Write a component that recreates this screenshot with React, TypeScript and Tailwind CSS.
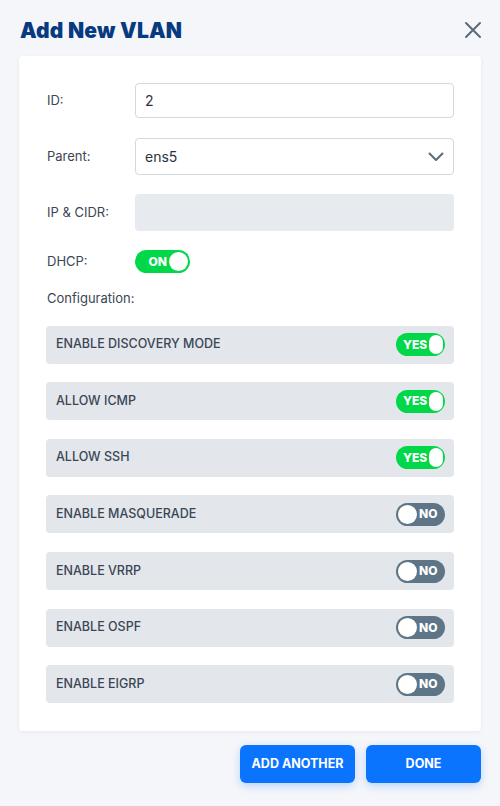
import React from 'react';

const rows: { label: string; on: boolean }[] = [
  { label: 'ENABLE DISCOVERY MODE', on: true },
  { label: 'ALLOW ICMP', on: true },
  { label: 'ALLOW SSH', on: true },
  { label: 'ENABLE MASQUERADE', on: false },
  { label: 'ENABLE VRRP', on: false },
  { label: 'ENABLE OSPF', on: false },
  { label: 'ENABLE EIGRP', on: false },
];

const Toggle: React.FC<{ on: boolean; onText: string; offText: string }> = ({ on, onText, offText }) => (
  <div
    className={`flex h-[23px] items-center rounded-full px-[2px] ${on ? 'bg-[#00d84a] justify-end' : 'bg-[#5d7586] justify-start'}`}
  >
    {on ? (
      <>
        <span className="pl-[5px] pr-[2px] text-[12px] font-extrabold leading-none text-white">{onText}</span>
        <span className="h-[19px] w-[19px] rounded-full bg-white" />
      </>
    ) : (
      <>
        <span className="h-[19px] w-[19px] rounded-full bg-white" />
        <span className="pl-[2px] pr-[5px] text-[12px] font-extrabold leading-none text-white">{offText}</span>
      </>
    )}
  </div>
);

export default function App() {
  return (
    <div className="min-h-[806px] bg-[#f4f6fa] px-[19px] pt-[17px] font-['Inter',sans-serif]">
      <div className="flex h-[26px] items-center justify-between">
        <h1 className="pl-[1px] text-[21px] font-black leading-none tracking-[0.2px] text-[#073a80]">Add New VLAN</h1>
        <svg width="18" height="18" viewBox="0 0 18 18" className="mr-[-1px]">
          <path d="M2 2 L16 16 M16 2 L2 16" stroke="#5b6b78" strokeWidth="2" strokeLinecap="round" />
        </svg>
      </div>

      <div className="mt-[13px] rounded-[4px] bg-white px-[27px] pt-[27px] pb-[28px] shadow-[0_1px_4px_rgba(0,0,0,0.06)]">
        <div className="flex items-center">
          <div className="w-[89px] pl-[1px] text-[13px] text-[#3b4653]">ID:</div>
          <div className="flex h-[35px] flex-1 items-center rounded-[4px] border border-[#d3d8de] px-[9px] text-[14px] text-[#2b3440]">2</div>
        </div>
        <div className="mt-[20px] flex items-center">
          <div className="w-[89px] pl-[1px] text-[13px] text-[#3b4653]">Parent:</div>
          <div className="flex h-[37px] flex-1 items-center justify-between rounded-[4px] border border-[#d3d8de] px-[9px] text-[14px] text-[#2b3440]">
            <span>ens5</span>
            <svg width="16" height="10" viewBox="0 0 16 10">
              <path d="M1.5 1.5 L8 8 L14.5 1.5" stroke="#5b6b78" strokeWidth="2" fill="none" strokeLinecap="round" strokeLinejoin="round" />
            </svg>
          </div>
        </div>
        <div className="mt-[19px] flex items-center">
          <div className="w-[89px] pl-[1px] text-[13px] text-[#3b4653]">IP &amp; CIDR:</div>
          <div className="h-[37px] flex-1 rounded-[4px] bg-[#e7eaee]" />
        </div>
        <div className="mt-[19px] flex items-center">
          <div className="w-[89px] pl-[1px] text-[13px] text-[#3b4653]">DHCP:</div>
          <div className="w-[55px]">
            <Toggle on onText="ON" offText="OFF" />
          </div>
        </div>
        <div className="mt-[16px] pl-[1px] text-[13px] text-[#3b4653]">Configuration:</div>

        <div className="mt-[17px] flex flex-col gap-[18.67px]">
          {rows.map((r) => (
            <div key={r.label} className="flex h-[38px] items-center justify-between rounded-[4px] bg-[#e3e6ea] pl-[10px] pr-[9px]">
              <span className="text-[12.5px] font-medium text-[#3a4656]">{r.label}</span>
              <div className="w-[49px]">
                <Toggle on={r.on} onText="YES" offText="NO" />
              </div>
            </div>
          ))}
        </div>
      </div>

      <div className="mt-[14px] flex justify-end gap-[11px]">
        <button className="h-[38px] w-[115px] rounded-[6px] bg-[#0a74ff] text-[12.5px] font-bold text-white shadow-[0_3px_8px_rgba(10,116,255,0.25)]">ADD ANOTHER</button>
        <button className="h-[38px] w-[115px] rounded-[6px] bg-[#0a74ff] text-[12.5px] font-bold text-white shadow-[0_3px_8px_rgba(10,116,255,0.25)]">DONE</button>
      </div>
    </div>
  );
}
